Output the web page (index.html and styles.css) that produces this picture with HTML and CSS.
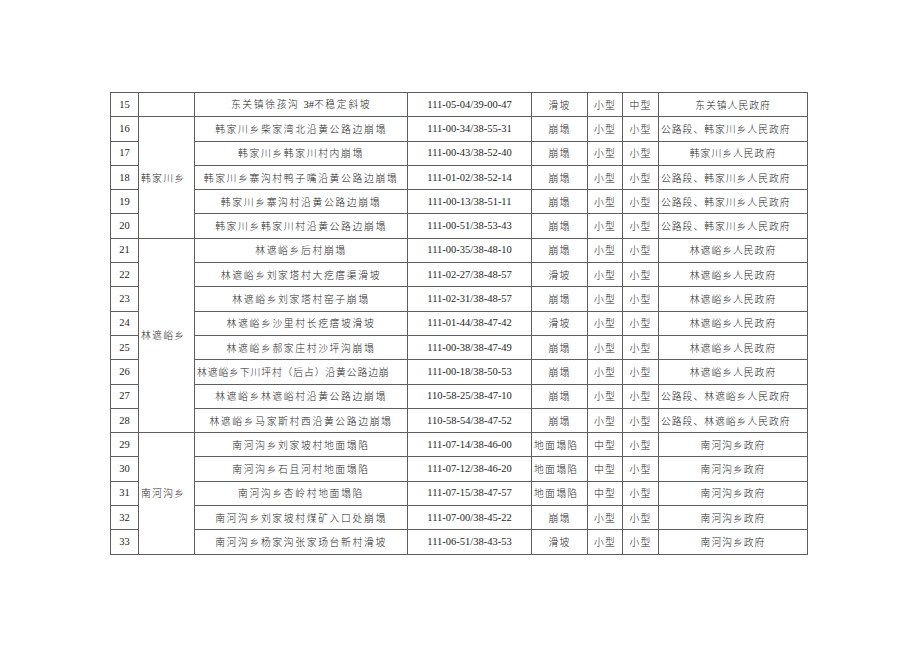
FILE: index.html
```html
<!DOCTYPE html>
<html lang="zh-CN">
<head>
<meta charset="utf-8">
<title>地质灾害隐患点</title>
<link rel="stylesheet" href="styles.css">
</head>
<body>
<div class="page">
<table class="grid">
<colgroup>
<col class="c-no"><col class="c-town"><col class="c-name"><col class="c-coord"><col class="c-type"><col class="c-s1"><col class="c-s2"><col class="c-resp">
</colgroup>
<tbody>
<tr><td class="num">15</td><td class="town"></td><td class="cn name">东关镇徐孩沟 <span class="lat">3#</span>不稳定斜坡</td><td class="num">111-05-04/39-00-47</td><td class="cn">滑坡</td><td class="cn">小型</td><td class="cn">中型</td><td class="cn resp">东关镇人民政府</td></tr>
<tr><td class="num">16</td><td class="town" rowspan="5">韩家川乡</td><td class="cn name">韩家川乡柴家湾北沿黄公路边崩塌</td><td class="num">111-00-34/38-55-31</td><td class="cn">崩塌</td><td class="cn">小型</td><td class="cn">小型</td><td class="cn resp left">公路段、韩家川乡人民政府</td></tr>
<tr><td class="num">17</td><td class="cn name">韩家川乡韩家川村内崩塌</td><td class="num">111-00-43/38-52-40</td><td class="cn">崩塌</td><td class="cn">小型</td><td class="cn">小型</td><td class="cn resp">韩家川乡人民政府</td></tr>
<tr><td class="num">18</td><td class="cn name">韩家川乡寨沟村鸭子嘴沿黄公路边崩塌</td><td class="num">111-01-02/38-52-14</td><td class="cn">崩塌</td><td class="cn">小型</td><td class="cn">小型</td><td class="cn resp left">公路段、韩家川乡人民政府</td></tr>
<tr><td class="num">19</td><td class="cn name">韩家川乡寨沟村沿黄公路边崩塌</td><td class="num">111-00-13/38-51-11</td><td class="cn">崩塌</td><td class="cn">小型</td><td class="cn">小型</td><td class="cn resp left">公路段、韩家川乡人民政府</td></tr>
<tr><td class="num">20</td><td class="cn name">韩家川乡韩家川村沿黄公路边崩塌</td><td class="num">111-00-51/38-53-43</td><td class="cn">崩塌</td><td class="cn">小型</td><td class="cn">小型</td><td class="cn resp left">公路段、韩家川乡人民政府</td></tr>
<tr><td class="num">21</td><td class="town" rowspan="8">林遮峪乡</td><td class="cn name">林遮峪乡后村崩塌</td><td class="num">111-00-35/38-48-10</td><td class="cn">崩塌</td><td class="cn">小型</td><td class="cn">小型</td><td class="cn resp">林遮峪乡人民政府</td></tr>
<tr><td class="num">22</td><td class="cn name">林遮峪乡刘家塔村大疙瘩渠滑坡</td><td class="num">111-02-27/38-48-57</td><td class="cn">滑坡</td><td class="cn">小型</td><td class="cn">小型</td><td class="cn resp">林遮峪乡人民政府</td></tr>
<tr><td class="num">23</td><td class="cn name">林遮峪乡刘家塔村窑子崩塌</td><td class="num">111-02-31/38-48-57</td><td class="cn">崩塌</td><td class="cn">小型</td><td class="cn">小型</td><td class="cn resp">林遮峪乡人民政府</td></tr>
<tr><td class="num">24</td><td class="cn name">林遮峪乡沙里村长疙瘩坡滑坡</td><td class="num">111-01-44/38-47-42</td><td class="cn">滑坡</td><td class="cn">小型</td><td class="cn">小型</td><td class="cn resp">林遮峪乡人民政府</td></tr>
<tr><td class="num">25</td><td class="cn name">林遮峪乡郝家庄村沙坪沟崩塌</td><td class="num">111-00-38/38-47-49</td><td class="cn">崩塌</td><td class="cn">小型</td><td class="cn">小型</td><td class="cn resp">林遮峪乡人民政府</td></tr>
<tr><td class="num">26</td><td class="cn left tight">林遮峪乡下川坪村（后占）沿黄公路边崩</td><td class="num">111-00-18/38-50-53</td><td class="cn">崩塌</td><td class="cn">小型</td><td class="cn">小型</td><td class="cn resp">林遮峪乡人民政府</td></tr>
<tr><td class="num">27</td><td class="cn name">林遮峪乡林遮峪村沿黄公路边崩塌</td><td class="num">110-58-25/38-47-10</td><td class="cn">崩塌</td><td class="cn">小型</td><td class="cn">小型</td><td class="cn resp left">公路段、林遮峪乡人民政府</td></tr>
<tr><td class="num">28</td><td class="cn name">林遮峪乡马家斯村西沿黄公路边崩塌</td><td class="num">110-58-54/38-47-52</td><td class="cn">崩塌</td><td class="cn">小型</td><td class="cn">小型</td><td class="cn resp left">公路段、林遮峪乡人民政府</td></tr>
<tr><td class="num">29</td><td class="town" rowspan="5">南河沟乡</td><td class="cn name">南河沟乡刘家坡村地面塌陷</td><td class="num">111-07-14/38-46-00</td><td class="cn left">地面塌陷</td><td class="cn">中型</td><td class="cn">小型</td><td class="cn resp">南河沟乡政府</td></tr>
<tr><td class="num">30</td><td class="cn name">南河沟乡石且河村地面塌陷</td><td class="num">111-07-12/38-46-20</td><td class="cn left">地面塌陷</td><td class="cn">中型</td><td class="cn">小型</td><td class="cn resp">南河沟乡政府</td></tr>
<tr><td class="num">31</td><td class="cn name">南河沟乡杏岭村地面塌陷</td><td class="num">111-07-15/38-47-57</td><td class="cn left">地面塌陷</td><td class="cn">中型</td><td class="cn">小型</td><td class="cn resp">南河沟乡政府</td></tr>
<tr><td class="num">32</td><td class="cn name">南河沟乡刘家坡村煤矿入口处崩塌</td><td class="num">111-07-00/38-45-22</td><td class="cn">崩塌</td><td class="cn">小型</td><td class="cn">小型</td><td class="cn resp">南河沟乡政府</td></tr>
<tr><td class="num">33</td><td class="cn name">南河沟乡杨家沟张家玚台新村滑坡</td><td class="num">111-06-51/38-43-53</td><td class="cn">滑坡</td><td class="cn">小型</td><td class="cn">小型</td><td class="cn resp">南河沟乡政府</td></tr>
</tbody>
</table>
</div>
</body>
</html>
```

FILE: styles.css
```css
html, body {
  margin: 0;
  padding: 0;
  background: #ffffff;
}

.page {
  padding: 92px 0 0 110px;
}

.grid {
  border-collapse: collapse;
  table-layout: fixed;
  width: 697px;
  color: #1e1e1e;
  font-family: "Liberation Serif", "Noto Sans CJK SC", serif;
}

.c-no { width: 28px; }
.c-town { width: 56px; }
.c-name { width: 213px; }
.c-coord { width: 124px; }
.c-type { width: 56px; }
.c-s1 { width: 35px; }
.c-s2 { width: 36px; }
.c-resp { width: 149px; }

.grid tr {
  height: 24.3px;
}

.grid td {
  border: 1px solid #5e5e5e;
  padding: 0;
  text-align: center;
  vertical-align: middle;
  white-space: nowrap;
  overflow: hidden;
  line-height: 14px;
}

.num {
  font-size: 10.5px;
}

.cn, .town {
  font-family: "Noto Sans CJK SC", "Liberation Serif", sans-serif;
  font-size: 9.8px;
  font-weight: 300;
  letter-spacing: 1.3px;
}

.cn.name {
  letter-spacing: 1.65px;
}

.cn.resp {
  letter-spacing: 1.0px;
}

.cn .lat {
  font-family: "Liberation Serif", serif;
  font-size: 10.5px;
  font-weight: 400;
  letter-spacing: 0;
}

.town {
  text-align: left !important;
  padding-left: 2px !important;
}

.left {
  text-align: left !important;
  padding-left: 2px !important;
}

.tight {
  letter-spacing: 0.9px;
}
```
